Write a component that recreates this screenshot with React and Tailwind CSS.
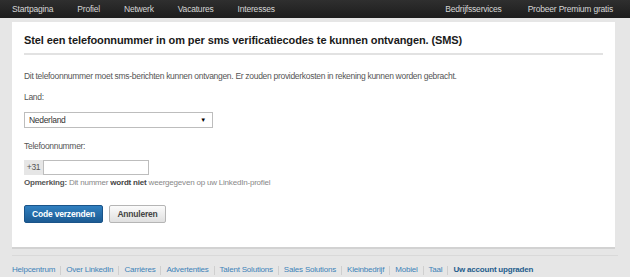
import React from 'react';

const navLeft = ['Startpagina', 'Profiel', 'Netwerk', 'Vacatures', 'Interesses'];
const footerLinks = [
  'Helpcentrum',
  'Over LinkedIn',
  'Carrières',
  'Advertenties',
  'Talent Solutions',
  'Sales Solutions',
  'Kleinbedrijf',
  'Mobiel',
  'Taal',
];

export default function App() {
  return (
    <div className="w-[630px] h-[277px] overflow-hidden bg-[#e6e6e6] font-[family-name:Liberation_Sans,Arial,sans-serif] whitespace-nowrap">
      {/* top nav */}
      <div className="h-[18px] bg-gradient-to-b from-[#2f2f2f] to-[#1d1d1d] flex items-center justify-between pl-3 pr-[17px] text-[8.5px] tracking-[-0.2px] text-[#d6d6d6]">
        <div className="flex gap-[24px]">
          {navLeft.map((item) => (
            <span key={item}>{item}</span>
          ))}
        </div>
        <div className="flex gap-[26px]">
          <span>Bedrijfsservices</span>
          <span>Probeer Premium gratis</span>
        </div>
      </div>

      {/* card */}
      <div className="mx-3 mt-[4px] w-[603px] h-[227px] bg-white border-b-2 border-[#d2d2d2] px-3 pt-[12px]">
        <h1 className="text-[11px] leading-[13px] font-bold tracking-[-0.1px] text-[#1a1a1a] pb-[6px] border-b-2 border-[#e2e2e2]">
          Stel een telefoonnummer in om per sms verificatiecodes te kunnen ontvangen. (SMS)
        </h1>

        <p className="mt-[16px] text-[8.5px] leading-[10px] tracking-[-0.3px] text-[#555]">
          Dit telefoonnummer moet sms-berichten kunnen ontvangen. Er zouden providerkosten in rekening kunnen worden gebracht.
        </p>

        <p className="mt-[11px] text-[8.5px] leading-[10px] tracking-[-0.3px] text-[#555]">Land:</p>

        <div className="mt-[10px] w-[189px] h-[16px] border border-[#bdbdbd] flex items-center justify-between pl-[4px] pr-[6px] text-[8.5px] tracking-[-0.3px] text-[#333]">
          <span>Nederland</span>
          <span className="text-[6px] text-black">▼</span>
        </div>

        <p className="mt-[13px] text-[8.5px] leading-[10px] tracking-[-0.3px] text-[#555]">Telefoonnummer:</p>

        <div className="mt-[9px] flex h-[15px]">
          <div className="w-[19px] bg-[#e6e6e6] text-[8.5px] tracking-[-0.3px] text-[#555] flex items-center justify-center">+31</div>
          <div className="w-[106px] border border-[#bdbdbd]"></div>
        </div>

        <p className="mt-[3px] text-[8px] leading-[10px] tracking-[-0.2px] text-[#888]">
          <span className="font-bold text-[#555]">Opmerking:</span> Dit nummer{' '}
          <span className="font-bold text-[#444]">wordt niet</span> weergegeven op uw LinkedIn-profiel
        </p>

        <div className="mt-[17px] flex gap-[6px]">
          <button className="w-[79px] h-[18px] rounded-[2px] bg-gradient-to-b from-[#3180c0] to-[#1c5b93] border border-[#1a5489] text-white text-[8.5px] tracking-[-0.2px] font-bold">
            Code verzenden
          </button>
          <button className="w-[57px] h-[18px] rounded-[2px] bg-gradient-to-b from-[#fbfbfb] to-[#e0e0e0] border border-[#b5b5b5] text-[#444] text-[8.5px] tracking-[-0.2px] font-bold">
            Annuleren
          </button>
        </div>
      </div>

      {/* footer */}
      <div className="mx-3 mt-[6px] border-t border-[#d9d9d9] pt-[8px] flex items-center text-[8px] tracking-[-0.2px] text-[#3d82b8]">
        {footerLinks.map((link) => (
          <span key={link} className="flex items-center">
            <span>{link}</span>
            <span className="mx-[5px] h-[9px] w-px bg-[#cfcfcf]"></span>
          </span>
        ))}
        <span className="font-bold text-[#1f5d8d]">Uw account upgraden</span>
      </div>
    </div>
  );
}
